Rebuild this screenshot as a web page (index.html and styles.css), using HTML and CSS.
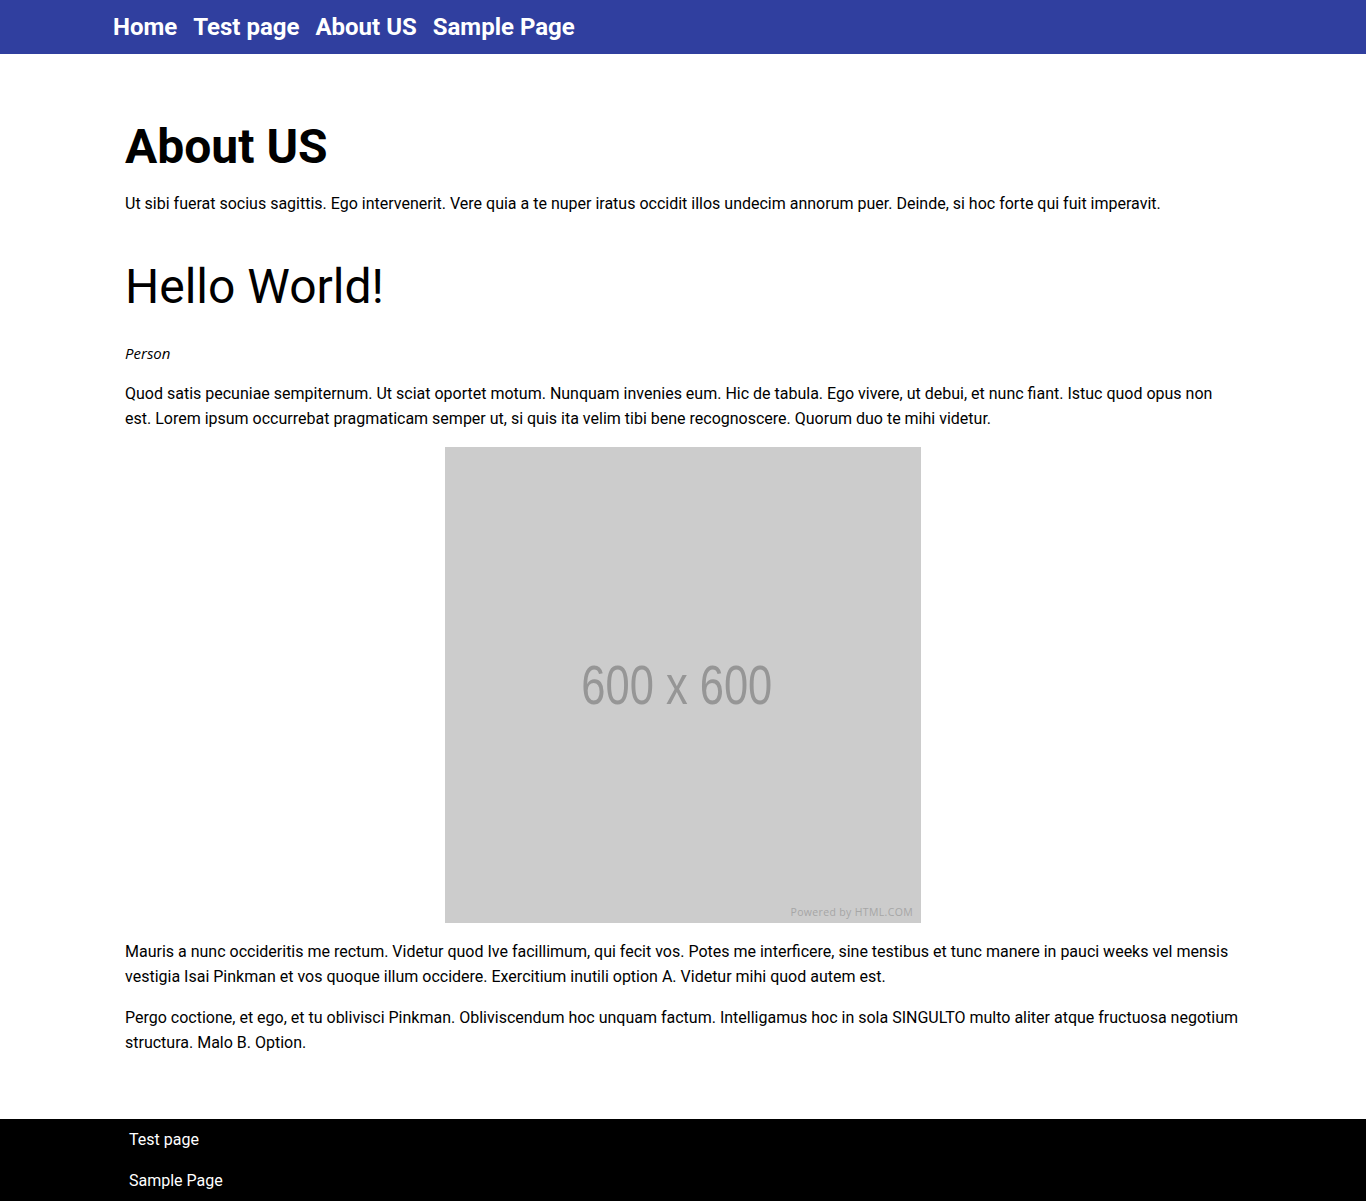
FILE: index.html
```html
<!DOCTYPE html>
<html lang="en">
<head>
<meta charset="utf-8">
<title>About US</title>
<link rel="stylesheet" href="styles.css">
</head>
<body>
<header class="topbar">
  <nav class="container nav">
    <a href="#">Home</a>
    <a href="#">Test page</a>
    <a href="#">About US</a>
    <a href="#">Sample Page</a>
  </nav>
</header>
<main class="container content">
  <h1 class="page-title">About US</h1>
  <p>Ut sibi fuerat socius sagittis. Ego intervenerit. Vere quia a te nuper iratus occidit illos undecim annorum puer. Deinde, si hoc forte qui fuit imperavit.</p>
  <h2 class="hello">Hello World!</h2>
  <p class="person">Person</p>
  <p>Quod satis pecuniae sempiternum. Ut sciat oportet motum. Nunquam invenies eum. Hic de tabula. Ego vivere, ut debui, et nunc fiant. Istuc quod opus non est. Lorem ipsum occurrebat pragmaticam semper ut, si quis ita velim tibi bene recognoscere. Quorum duo te mihi videtur.</p>
  <div class="placeholder">
    <span class="ph-size">600 x 600</span>
    <span class="ph-powered">Powered by HTML.COM</span>
  </div>
  <p>Mauris a nunc occideritis me rectum. Videtur quod Ive facillimum, qui fecit vos. Potes me interficere, sine testibus et tunc manere in pauci weeks vel mensis vestigia Isai Pinkman et vos quoque illum occidere. Exercitium inutili option A. Videtur mihi quod autem est.</p>
  <p>Pergo coctione, et ego, et tu oblivisci Pinkman. Obliviscendum hoc unquam factum. Intelligamus hoc in sola SINGULTO multo aliter atque fructuosa negotium structura. Malo B. Option.</p>
</main>
<footer class="footer">
  <ul class="container footer-links">
    <li><a href="#">Test page</a></li>
    <li><a href="#">Sample Page</a></li>
  </ul>
</footer>
</body>
</html>
```
FILE: styles.css
```css
* { box-sizing: border-box; }
html, body { margin: 0; padding: 0; }
body {
  font-family: Roboto, "Liberation Sans", sans-serif;
  font-size: 16px;
  line-height: 25px;
  color: #000;
  background: #fff;
}
.container {
  width: 1140px;
  margin: 0 auto;
}
.topbar {
  background: #303f9f;
  height: 54px;
}
.nav {
  display: flex;
  gap: 16px;
  padding: 0;
  height: 54px;
  align-items: center;
}
.nav a {
  color: #fff;
  text-decoration: none;
  font-weight: 700;
  font-size: 24px;
  line-height: 54px;
}
.content {
  padding: 64px 12px 48px;
}
.content p {
  margin: 0 0 16px;
}
.page-title {
  font-size: 48px;
  font-weight: 700;
  line-height: 58px;
  margin: 0 0 15px;
}
.hello {
  font-size: 48px;
  font-weight: 400;
  line-height: 58px;
  margin: 42px 0 25px;
}
.content p.person {
  font-family: "Open Sans", sans-serif;
  font-style: italic;
  font-size: 15px;
  margin-bottom: 15px;
}
.placeholder {
  position: relative;
  width: 476px;
  height: 476px;
  margin: 0 auto 16px;
  background: #cccccc;
  display: flex;
  align-items: center;
  justify-content: center;
}
.ph-size {
  font-family: "Liberation Sans", Arial, sans-serif;
  font-size: 55px;
  line-height: 60px;
  color: #969696;
  transform: scaleX(0.79);
  margin: 0 0 0 -12px;
}
.ph-powered {
  position: absolute;
  right: 8px;
  bottom: 4px;
  font-family: "Open Sans", sans-serif;
  font-size: 10.5px;
  line-height: 14px;
  color: #a6a6a6;
  letter-spacing: 0.35px;
}
.footer {
  background: #000;
  height: 82px;
}
.footer-links {
  list-style: none;
  margin: 0 auto;
  padding: 8px 16px 0;
}
.footer-links li {
  height: 41px;
}
.footer-links a {
  color: #fff;
  text-decoration: none;
  font-size: 16px;
}
```
